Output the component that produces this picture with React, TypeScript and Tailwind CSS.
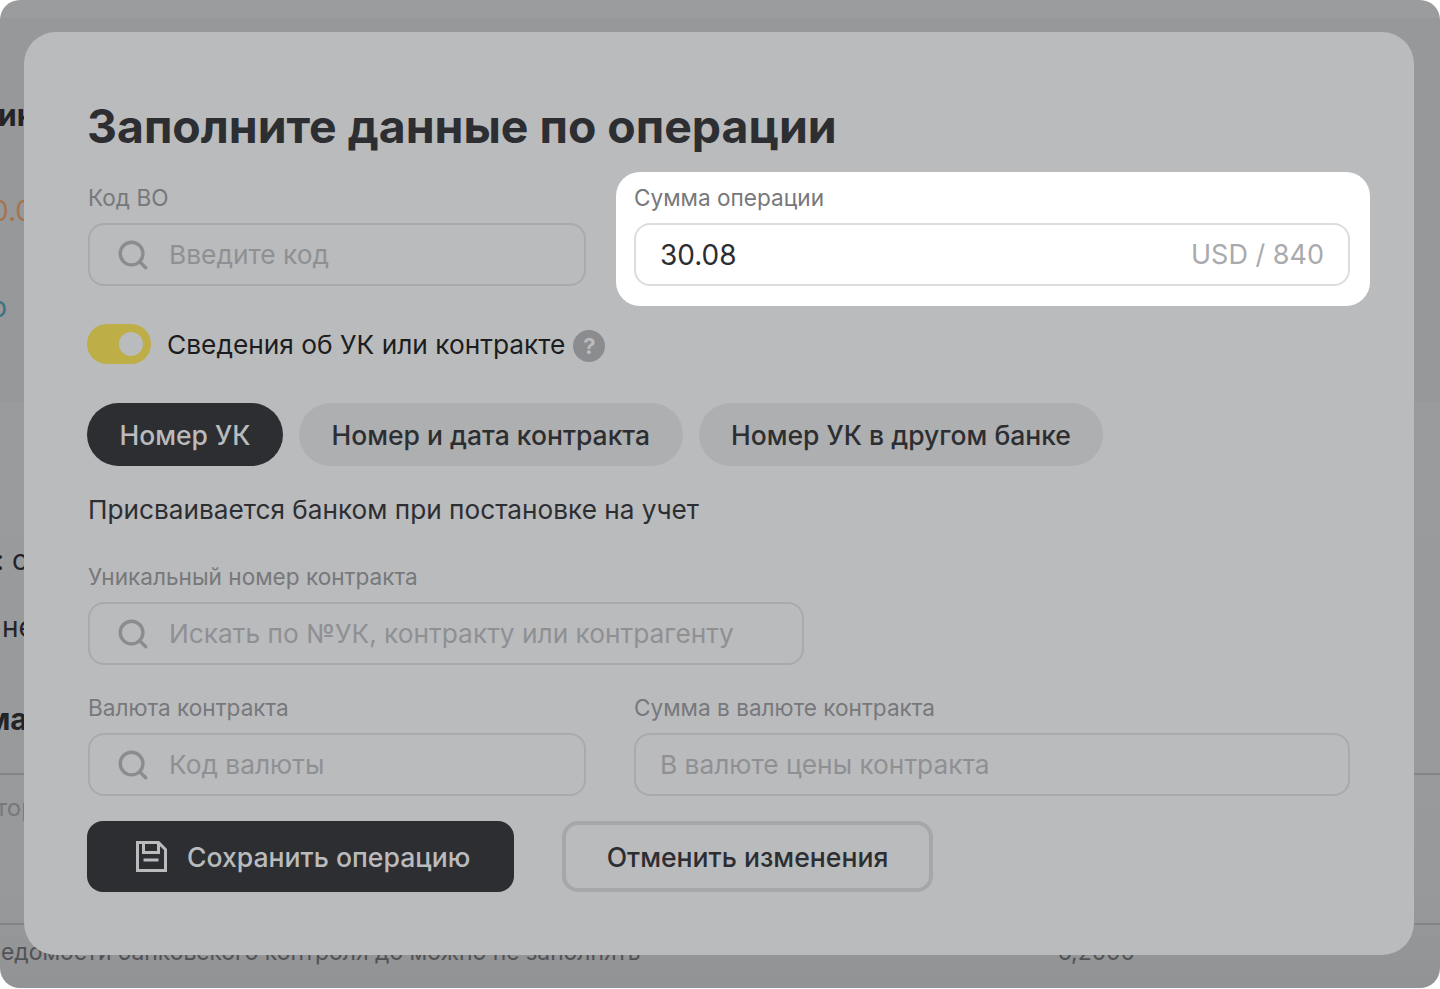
import { Search } from "lucide-react";

function Label({ children }: { children: React.ReactNode }) {
  return <div className="h-[24px] text-[22.6px] leading-[24px] text-[#77787b]">{children}</div>;
}

function Field({ placeholder, icon = true, width }: { placeholder: string; icon?: boolean; width?: string }) {
  return (
    <div className={`mt-[13px] flex h-[63px] items-center rounded-[16px] border-2 border-[#a9aaac] ${icon ? "pl-[26px]" : "pl-[24px]"} ${width ?? "w-full"}`}>
      {icon && <Search className="mr-[19px] h-[34px] w-[34px] text-[#8b8c8f]" strokeWidth={2.4} />}
      <span className="text-[26.3px] leading-[32px] text-[#8f9093]">{placeholder}</span>
    </div>
  );
}

function SaveIcon() {
  return (
    <svg width="31" height="31" viewBox="0 0 31 31" fill="none" stroke="#babbbd" strokeWidth="3">
      <path d="M1.5 1.5h21l7 7v21h-28z" />
      <path d="M7.5 1.5v10h15v-10" />
      <path d="M7.5 19h15" />
    </svg>
  );
}

function Backdrop() {
  return (
    <div className="h-[988px] overflow-hidden rounded-[20px] bg-[linear-gradient(180deg,#9b9c9e_0,#9b9c9e_18px,#97989a_18px,#97989a_402px,#9a9b9d_402px,#98999b_880px,#929395_988px)] text-[#232427]">
      <div className="mt-[98px] -ml-[2px] h-[34px] text-[30px] font-bold leading-[34px]">ик</div>
      <div className="mt-[62px] -ml-[9px] h-[34px] text-[28px] leading-[34px] text-[#a5744f]">0.00</div>
      <div className="mt-[62px] -ml-[27px] h-[34px] text-[28px] leading-[34px] text-[#3f7382]">ро</div>
      <div className="mt-[219px] -ml-[4px] h-[34px] text-[28px] leading-[34px]">: с</div>
      <div className="mt-[33px] ml-[2px] h-[34px] text-[28px] leading-[34px]">не</div>
      <div className="mt-[58px] -ml-[14px] h-[34px] text-[30px] font-bold leading-[34px]">ма</div>
      <div className="mt-[37px] h-[2px] bg-[#838487]" />
      <div className="mt-[18px] -ml-[4px] h-[30px] text-[24px] leading-[30px] text-[#77787b]">тор</div>
      <div className="mt-[100px] h-[2px] bg-[#838487]" />
      <div className="mt-[10px] flex h-[34px] items-center pl-[1px] pr-[305px] text-[22.9px] leading-[34px] text-[#515255]">
        <span className="flex-1">едомости банковского контроля до можно не заполнять</span>
        <span>6,2000</span>
      </div>
    </div>
  );
}

export default function App() {
  return (
    <div className="relative h-[989px] w-[1440px] overflow-hidden bg-white font-['Inter',sans-serif]">
      <Backdrop />
      <div className="absolute left-[24px] top-[32px] h-[923px] w-[1390px] rounded-[32px] bg-[#babbbd] px-[64px] pt-[64px]">
        <h1 className="-ml-[1px] h-[60px] text-[46.4px] font-bold leading-[60px] text-[#2d2e32]">Заполните данные по операции</h1>
        <div className="mt-[30px] grid grid-cols-[498px_716px] gap-x-[48px]">
          <div>
            <Label>Код ВО</Label>
            <Field placeholder="Введите код" />
          </div>
          <div className="-my-[14px] -ml-[18px] -mr-[20px] rounded-[24px] bg-white pb-[20px] pl-[18px] pr-[20px] pt-[14px]">
            <Label>Сумма операции</Label>
            <div className="mt-[13px] flex h-[63px] items-center justify-between rounded-[16px] border-2 border-[#dcdde0] pl-[24px] pr-[24px]">
              <span className="text-[28px] leading-[32px] text-[#2d2e32]">30.08</span>
              <span className="text-[27px] leading-[32px] text-[#a9aaad]">USD / 840</span>
            </div>
          </div>
        </div>

        <div className="mt-[32px] -ml-[1px] flex h-[40px] items-center">
          <div className="flex h-[40px] w-[64px] items-center justify-end rounded-full bg-[#bdae48] pr-[8px]">
            <div className="h-[24px] w-[24px] rounded-full bg-[#babbbd]" />
          </div>
          <span className="ml-[16px] mt-[2px] text-[26.3px] leading-[32px] text-[#1c1d20]">Сведения об УК или контракте</span>
          <span className="ml-[8px] mt-[3px] flex h-[32px] w-[32px] items-center justify-center rounded-full bg-[#8b8c90] text-[22px] font-bold leading-none text-[#babbbd]">?</span>
        </div>

        <div className="mt-[39px] -ml-[1px] flex gap-[16px] text-[26.5px] font-medium leading-[32px]">
          <div className="flex h-[63px] items-center rounded-full bg-[#2d2e32] px-[32.5px] text-[#babbbd]">Номер УК</div>
          <div className="flex h-[63px] items-center rounded-full bg-[#aeafb1] px-[32.5px] text-[#2d2e32]">Номер и дата контракта</div>
          <div className="flex h-[63px] items-center rounded-full bg-[#aeafb1] px-[32.5px] text-[#2d2e32]">Номер УК в другом банке</div>
        </div>

        <p className="mt-[28px] h-[32px] text-[26.2px] leading-[32px] text-[#2d2e32]">Присваивается банком при постановке на учет</p>

        <div className="mt-[39px]">
          <Label>Уникальный номер контракта</Label>
          <Field placeholder="Искать по №УК, контракту или контрагенту" width="w-[716px]" />
        </div>

        <div className="mt-[31px] grid grid-cols-[498px_716px] gap-x-[48px]">
          <div>
            <Label>Валюта контракта</Label>
            <Field placeholder="Код валюты" />
          </div>
          <div>
            <Label>Сумма в валюте контракта</Label>
            <Field placeholder="В валюте цены контракта" icon={false} />
          </div>
        </div>

        <div className="mt-[25px] -ml-[1px] flex gap-[48px] text-[26.6px] font-medium leading-[32px]">
          <div className="flex h-[71px] w-[427px] items-center gap-[20px] rounded-[16px] bg-[#2d2e32] pl-[49px] text-[#babbbd]">
            <SaveIcon />
            Сохранить операцию
          </div>
          <div className="flex h-[71px] w-[371px] items-center justify-center rounded-[16px] border-4 border-[#a6a7a9] text-[#2d2e32]">
            Отменить изменения
          </div>
        </div>
      </div>
    </div>
  );
}
